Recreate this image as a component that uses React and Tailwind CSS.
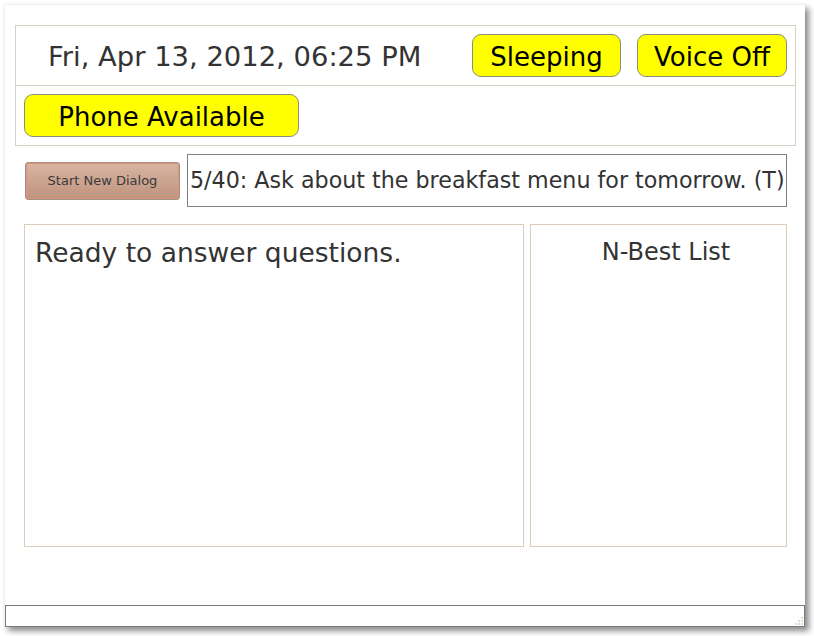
import React from 'react';

const font = { fontFamily: '"DejaVu Sans", Verdana, sans-serif' };

const YellowButton = ({ label, className }) => (
  <button className={`h-[43px] rounded-[9px] border border-[#8c8c7a] bg-[#ffff00] pt-[2px] text-[26px] leading-none text-black ${className}`}>
    {label}
  </button>
);

const ResizeGrip = () => (
  <svg className="absolute right-[1px] bottom-[1px]" width="10" height="10" viewBox="0 0 10 10">
    {[[8, 2], [5, 5], [8, 5], [2, 8], [5, 8], [8, 8]].map(([x, y], i) => (
      <rect key={i} x={x} y={y} width="2" height="2" fill="#e2dccd" />
    ))}
  </svg>
);

export default function App() {
  return (
    <div className="w-[814px] h-[636px] bg-white pl-[4px] pt-[4px]" style={font}>
      <div className="w-[801px] h-[623px] flex flex-col bg-white border-l border-t border-[#efefef] shadow-[4px_4px_6px_rgba(0,0,0,0.45)]">
        <div className="ml-[10px] mt-[20px] w-[781px] border border-[#d8d0c4]">
          <div className="h-[60px] flex items-center border-b border-[#d8d0c4]">
            <span className="ml-[32px] pt-[3px] text-[27.4px] text-[#333333] whitespace-nowrap">Fri, Apr 13, 2012, 06:25 PM</span>
            <div className="ml-auto mr-[8px] flex gap-[16px]">
              <YellowButton label="Sleeping" className="w-[149px]" />
              <YellowButton label="Voice Off" className="w-[150px]" />
            </div>
          </div>
          <div className="h-[59px] flex items-center pl-[8px]">
            <YellowButton label="Phone Available" className="w-[275px]" />
          </div>
        </div>

        <div className="mt-[8px] ml-[20px] flex items-center gap-[7px]">
          <button className="w-[155px] h-[38px] rounded-[3px] border border-[#9c9288] bg-gradient-to-b from-[#d8b5a3] to-[#bf937d] shadow-[inset_0_0_0_1px_#e29078] text-[13px] text-[#3a3a3a]">
            Start New Dialog
          </button>
          <div className="w-[600px] h-[53px] border border-[#7f7f7f] flex items-center pl-[2px] text-[22.2px] text-[#333333] whitespace-nowrap">
            5/40: Ask about the breakfast menu for tomorrow. (T)
          </div>
        </div>

        <div className="mt-[17px] ml-[19px] flex gap-[6px]">
          <div className="w-[500px] h-[323px] border border-[#dbcdb9] pl-[10px] pt-[8px] text-[26.5px] text-[#333333]">
            Ready to answer questions.
          </div>
          <div className="w-[257px] h-[323px] border border-[#dbcdb9] pl-[15px] pt-[9px] text-center text-[24px] text-[#333333]">
            N-Best List
          </div>
        </div>

        <div className="relative mt-auto h-[22px] border border-[#7a7a7a] bg-white">
          <ResizeGrip />
        </div>
      </div>
    </div>
  );
}
